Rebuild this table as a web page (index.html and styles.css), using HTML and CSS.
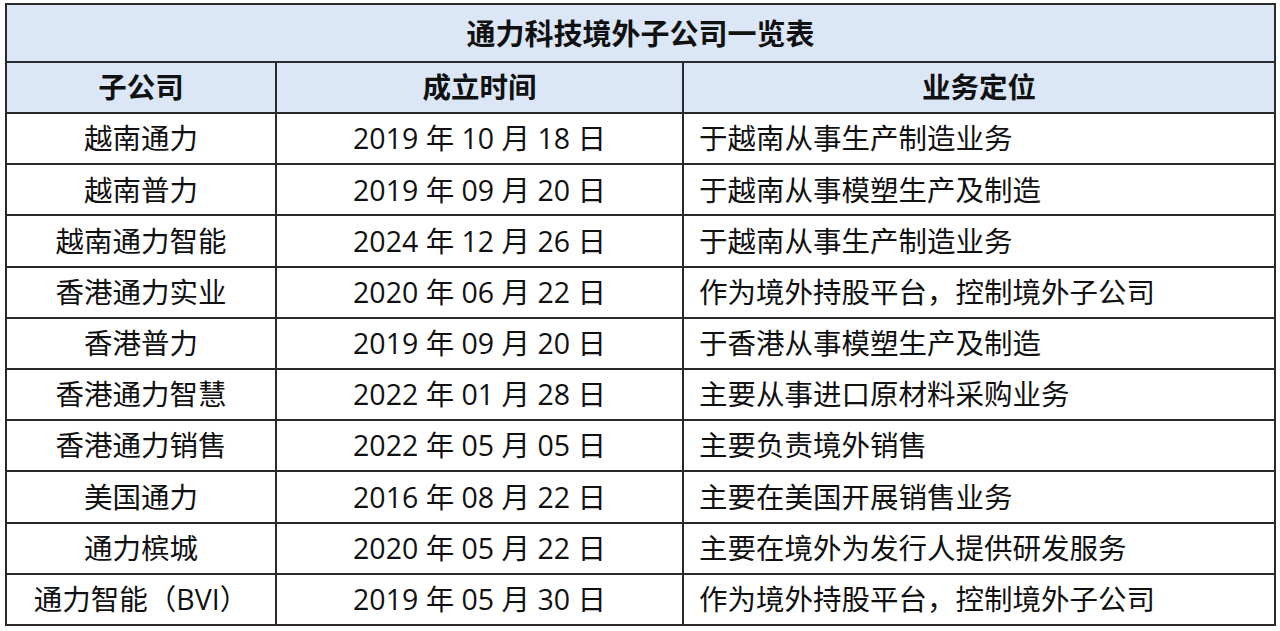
FILE: index.html
```html
<!DOCTYPE html>
<html lang="zh-CN">
<head>
<meta charset="utf-8">
<title>通力科技境外子公司一览表</title>
<link rel="stylesheet" href="styles.css">
</head>
<body>
<div class="wrap">
<table class="tbl">
  <colgroup>
    <col class="c1">
    <col class="c2">
    <col class="c3">
  </colgroup>
  <thead>
    <tr class="title-row"><th colspan="3">通力科技境外子公司一览表</th></tr>
    <tr class="head-row"><th>子公司</th><th>成立时间</th><th>业务定位</th></tr>
  </thead>
  <tbody>
    <tr><td class="name">越南通力</td><td class="date">2019 年 10 月 18 日</td><td class="desc">于越南从事生产制造业务</td></tr>
    <tr><td class="name">越南普力</td><td class="date">2019 年 09 月 20 日</td><td class="desc">于越南从事模塑生产及制造</td></tr>
    <tr><td class="name">越南通力智能</td><td class="date">2024 年 12 月 26 日</td><td class="desc">于越南从事生产制造业务</td></tr>
    <tr><td class="name">香港通力实业</td><td class="date">2020 年 06 月 22 日</td><td class="desc">作为境外持股平台，控制境外子公司</td></tr>
    <tr><td class="name">香港普力</td><td class="date">2019 年 09 月 20 日</td><td class="desc">于香港从事模塑生产及制造</td></tr>
    <tr><td class="name">香港通力智慧</td><td class="date">2022 年 01 月 28 日</td><td class="desc">主要从事进口原材料采购业务</td></tr>
    <tr><td class="name">香港通力销售</td><td class="date">2022 年 05 月 05 日</td><td class="desc">主要负责境外销售</td></tr>
    <tr><td class="name">美国通力</td><td class="date">2016 年 08 月 22 日</td><td class="desc">主要在美国开展销售业务</td></tr>
    <tr><td class="name">通力槟城</td><td class="date">2020 年 05 月 22 日</td><td class="desc">主要在境外为发行人提供研发服务</td></tr>
    <tr><td class="name">通力智能（BVI）</td><td class="date">2019 年 05 月 30 日</td><td class="desc">作为境外持股平台，控制境外子公司</td></tr>
  </tbody>
</table>
</div>
</body>
</html>
```

FILE: styles.css
```css
html, body {
  margin: 0;
  padding: 0;
  background: #ffffff;
}
.wrap {
  padding: 3px 4px 0 5px;
}
.tbl {
  width: 1271px;
  border-collapse: collapse;
  table-layout: fixed;
  font-family: "Open Sans", "Noto Sans CJK SC", sans-serif;
  font-size: 28.5px;
  color: #111111;
  border: 2px solid #2a2a2a;
}
.c1 { width: 270px; }
.c2 { width: 407px; }
.c3 { width: auto; }
.tbl th,
.tbl td {
  border: 2px solid #2a2a2a;
  padding: 0;
  line-height: 1;
  white-space: nowrap;
}
.tbl th {
  background: #dbe7f6;
  font-weight: 700;
  text-align: center;
}
.tbl .title-row th { height: 56px; font-size: 29px; }
.tbl .head-row th { height: 49px; }
.tbl td { height: 49.2px; }
.tbl .name,
.tbl .date { text-align: center; }
.tbl .desc { text-align: left; padding-left: 15px; }
```
